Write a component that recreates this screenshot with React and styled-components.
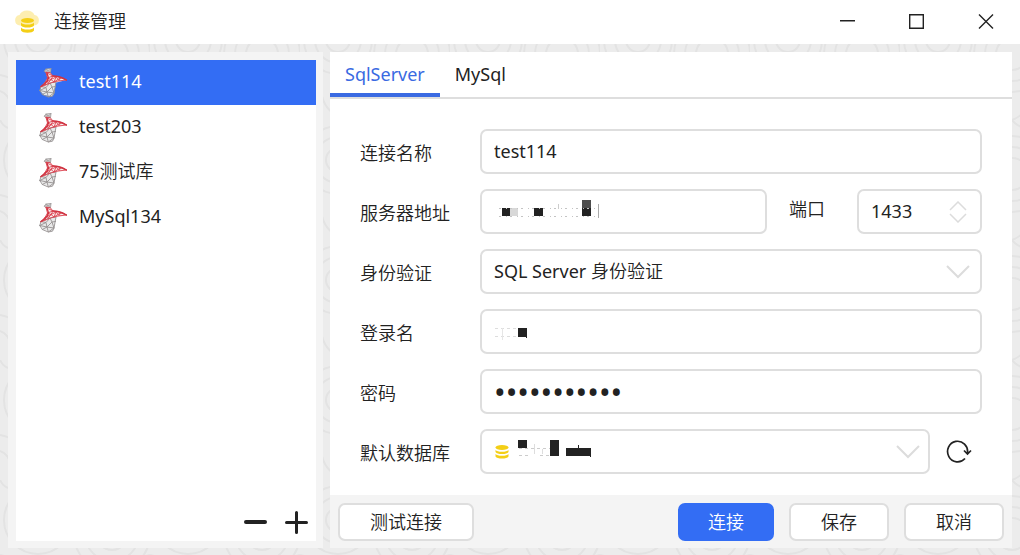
import React, { useState } from "react";
import styled, { createGlobalStyle } from "styled-components";

const GlobalStyle = createGlobalStyle`
  * { box-sizing: border-box; }
  body { margin: 0; }
  body, button, input, select {
    font-family: "Noto Sans", "Noto Sans CJK SC", sans-serif;
    font-size: 18px;
    font-weight: 400;
    color: #222;
  }
  :lang(zh) { font-family: "Noto Sans CJK SC", sans-serif; font-weight: 350; }
`;

const Window = styled.div`
  position: relative;
  min-height: 100vh;
  display: flex;
  flex-direction: column;
  background: #ececec;
`;

const Backdrop = styled.svg`
  position: absolute;
  inset: 0;
  width: 100%;
  height: 100%;
`;

const TitleBar = styled.header`
  position: relative;
  display: flex;
  align-items: center;
  height: 44px;
  padding-left: 15px;
  gap: 15px;
  background: #fff;
`;

const Title = styled.h1`
  flex: 1;
  margin: 0;
  padding-bottom: 4px;
  font-size: 18px;
  line-height: 24px;
`;

const WindowControls = styled.div`
  display: flex;
  align-self: stretch;
`;

const PlainButton = styled.button`
  display: flex;
  align-items: center;
  justify-content: center;
  padding: 0;
  border: 0;
  background: transparent;
`;

const ControlButton = styled(PlainButton)`
  width: 69px;
`;

const Body = styled.main`
  position: relative;
  flex: 1;
  display: grid;
  grid-template-columns: 315px 1fr;
  gap: 7px;
  padding: 8px 8px 7px;
`;

const Sidebar = styled.aside`
  display: flex;
  padding: 8px 7px 7px 8px;
  background: #f4f4f4;
`;

const SidebarInner = styled.div`
  flex: 1;
  display: flex;
  flex-direction: column;
  justify-content: space-between;
  background: #fff;
`;

const ConnectionList = styled.ul`
  margin: 0;
  padding: 0;
  list-style: none;
`;

const ConnectionItem = styled.button`
  display: flex;
  align-items: center;
  gap: 12px;
  width: 100%;
  height: 45px;
  padding: 0 23px;
  border: 0;
  text-align: left;
  color: ${(p) => (p.$active ? "#fff" : "#222")};
  background: ${(p) => (p.$active ? "#336df4" : "transparent")};
`;

const ConnectionName = styled.span`
  padding-bottom: 4px;
  line-height: 24px;
`;

const SidebarTools = styled.div`
  display: flex;
  justify-content: flex-end;
  gap: 18px;
  padding: 7px 8px;
`;

const Panel = styled.section`
  display: flex;
  flex-direction: column;
  min-width: 0;
  background: #fff;
`;

const Tabs = styled.div`
  display: flex;
  height: 47px;
  border-bottom: 2px solid #dedede;
`;

const Tab = styled.button`
  padding: 0 15px 2px;
  border: 0;
  border-top: 4px solid transparent;
  border-bottom: 4px solid ${(p) => (p.$active ? "#3a6ae2" : "transparent")};
  background: transparent;
  color: ${(p) => (p.$active ? "#3a6ae2" : "#222")};
`;

const Form = styled.form`
  flex: 1;
  display: flex;
  flex-direction: column;
  gap: 15px;
  padding: 30px 30px 21px;
`;

const Row = styled.div`
  display: flex;
  align-items: center;
`;

const Label = styled.label`
  width: 120px;
  flex-shrink: 0;
  line-height: 24px;
`;

const PortLabel = styled.label`
  padding: 0 32px 8px 22px;
  line-height: 24px;
`;

const Field = styled.div`
  position: relative;
  display: flex;
  height: 45px;
  min-width: 0;
  flex: ${(p) => (p.$fixed ? "0 0 125px" : "1")};
`;

const controlStyle = `
  width: 100%;
  height: 45px;
  padding: 0 12px 2px;
  border: 2px solid #dedede;
  border-radius: 7px;
  background: #fff;
  outline: none;
`;

const TextInput = styled.input`
  ${controlStyle}
  appearance: textfield;
  &::-webkit-inner-spin-button { display: none; }
`;

const PasswordInput = styled(TextInput)`
  padding-bottom: 0;
  font-family: "Noto Sans", sans-serif;
  font-size: 31px;
`;

const Select = styled.select`
  ${controlStyle}
  appearance: none;
  font-family: "Noto Sans", "Noto Sans CJK SC DemiLight", "Noto Sans CJK SC", sans-serif;
`;

const FieldIcon = styled.span`
  position: absolute;
  top: 0;
  bottom: 0;
  right: ${(p) => p.$right}px;
  display: flex;
  align-items: center;
  pointer-events: none;
`;

const Masked = styled.svg`
  position: absolute;
  left: 14px;
  top: 9px;
  pointer-events: none;
`;

const RefreshButton = styled(PlainButton)`
  width: 52px;
  height: 45px;
  padding-right: 9px;
  padding-left: 15px;
`;

const Footer = styled.footer`
  display: flex;
  gap: 15px;
  padding: 8px 8px 7px;
  background: #f4f4f4;
`;

const Button = styled.button`
  width: ${(p) => p.$width}px;
  height: 38px;
  padding: 0 0 2px;
  border: ${(p) => (p.$primary ? "0" : "2px solid #dedede")};
  border-radius: 7px;
  background: ${(p) => (p.$primary ? "#336df4" : "#fff")};
  color: ${(p) => (p.$primary ? "#fff" : "#222")};
  margin-right: ${(p) => (p.$push ? "auto" : "0")};
`;

function BackdropPattern() {
  return (
    <Backdrop aria-hidden="true">
      <defs>
        <pattern id="rings" width="150" height="120" patternUnits="userSpaceOnUse">
          <g fill="none" stroke="#e3e3e3" strokeWidth="2">
            <circle cx="38" cy="40" r="34" />
            <circle cx="38" cy="40" r="23" />
            <circle cx="38" cy="40" r="12" />
            <circle cx="112" cy="54" r="38" />
            <circle cx="112" cy="54" r="27" />
            <circle cx="112" cy="54" r="16" />
            <path d="M0 75Q18 78 22 96T48 120M0 91Q9 94 11 106T22 120M48 0Q65 8 75 0M0 0Q8 16 22 0M150 75Q132 78 130 96T112 120M150 91Q143 94 142 106T134 120M112 0Q124 14 134 0" />
            <path d="M38 84q22-6 32 10t26 26M40 98q14-2 22 10l10 12" />
          </g>
        </pattern>
      </defs>
      <rect width="100%" height="100%" fill="url(#rings)" />
    </Backdrop>
  );
}

function AppLogo() {
  return (
    <svg width="24" height="24" viewBox="0 0 24 24" aria-hidden="true">
      <path d="M5 15.500A5.300 5.300 0 0 1 4.500 5A8 7 0 0 1 19.500 5A5.300 5.300 0 0 1 19 15.500Z" fill="#fdeeb0" />
      <g fill="#f4cf16">
        <ellipse cx="12.500" cy="10.500" rx="6.500" ry="2.600" />
        <path d="M6 12.500q1.500 2 6.500 2t6.500-2v3q-1.500 2-6.500 2T6 15.500z" />
        <path d="M6 17.500q1.500 2 6.500 2t6.500-2v3q-1.500 2.200-6.500 2.200T6 20.500z" />
      </g>
    </svg>
  );
}

function ServerIcon() {
  return (
    <svg width="28" height="30" viewBox="0 0 28 30" aria-hidden="true">
      <path d="M5.500 3L7 1l5-.5-.5 4L7 4.500z" fill="#e0dede" />
      <path d="M2 18.500L11 15l6-1-2 12-2 2.500-8-1.500-4-4z" fill="#e8e8e8" />
      <path d="M7 4.500l4.500.5L14 8l7 1.500 6.500 2.500-8 2-7 1.500-10.500 4L6 14l2.500-4z" fill="#f9eeee" />
      <g fill="none" strokeLinejoin="round" strokeLinecap="round">
        <path d="M5.500 3L7 1l5-.5-.5 4L7 4.500zM7 1l2.500 2 2.500-2.500M5.500 3h4l2 1.500" stroke="#999595" strokeWidth=".8" />
        <path d="M2 18.500L.8 22.500l2.500 4 6 2.500 4.200-.8 1.500-3.200 2-11-6 1zM2 18.500l5 1 4-4.500 2 4 3.500-.5M.8 22.500L7 19.500l1 4.500 5-5 2 6M.8 22.500L8 24l-4.700 2.500M8 24l7 1-5.700 4L8 24" stroke="#969292" strokeWidth=".9" />
        <path d="M7 4.500L8.500 10 6 14.500 1.500 19l5-2 6.500-2.500 6-1.500 8.500-1L20 9l-6-1-2.500-3zM8.500 10L14 8M7 4.500L14 8l-2 3.500-3.500-1.500L9 15.500l3-4 3 2.500 2-5-5 2.500M6 14.500l6-3M17 9l3 3.500L22 9.500M15 14l7-4.500 5.500 2.500M6 14.500l.5 2.500" stroke="#dc4350" strokeWidth=".9" />
        <path d="M8 5L9.500 10Q8 15 2 18.500M14 8q7 0 13.500 4" stroke="#cf3442" strokeWidth="1.300" />
      </g>
    </svg>
  );
}

function Chevron() {
  return (
    <svg width="24" height="14" viewBox="0 0 24 14" fill="none" stroke="#dcdcdc" strokeWidth="2" aria-hidden="true">
      <path d="M1 1l11 11L23 1" />
    </svg>
  );
}

const CONNECTIONS = ["test114", "test203", "75测试库", "MySql134"];

export default function App() {
  const [selected, setSelected] = useState(0);
  const [tab, setTab] = useState("SqlServer");

  return (
    <Window lang="en">
      <GlobalStyle />
      <BackdropPattern />
      <TitleBar>
        <AppLogo />
        <Title lang="zh">连接管理</Title>
        <WindowControls>
          <ControlButton aria-label="最小化">
            <svg width="16" height="16" stroke="#222" strokeWidth="1.500"><path d="M0 6.750h15" /></svg>
          </ControlButton>
          <ControlButton aria-label="最大化">
            <svg width="16" height="16" fill="none" stroke="#222" strokeWidth="1.400"><path d="M.7.700h13.600v13.600H.7z" /></svg>
          </ControlButton>
          <ControlButton aria-label="关闭">
            <svg width="16" height="16" stroke="#222" strokeWidth="1.400"><path d="M1 .5l14 14M15 .5L1 14.500" /></svg>
          </ControlButton>
        </WindowControls>
      </TitleBar>

      <Body>
        <Sidebar>
          <SidebarInner>
            <ConnectionList>
              {CONNECTIONS.map((name, i) => (
                <li key={name}>
                  <ConnectionItem $active={i === selected} onClick={() => setSelected(i)}>
                    <ServerIcon />
                    <ConnectionName>
                      {name.startsWith("75") ? <>75<span lang="zh">测试库</span></> : name}
                    </ConnectionName>
                  </ConnectionItem>
                </li>
              ))}
            </ConnectionList>
            <SidebarTools>
              <PlainButton aria-label="删除">
                <svg width="23" height="24" stroke="#222" strokeWidth="4" strokeLinecap="round"><path d="M2 12h19" /></svg>
              </PlainButton>
              <PlainButton aria-label="新增">
                <svg width="23" height="24" stroke="#222" strokeWidth="3" strokeLinecap="round"><path d="M1.500 12.500h20M11.500 2.500v20" /></svg>
              </PlainButton>
            </SidebarTools>
          </SidebarInner>
        </Sidebar>

        <Panel>
          <Tabs role="tablist">
            {["SqlServer", "MySql"].map((t) => (
              <Tab key={t} role="tab" aria-selected={t === tab} $active={t === tab} onClick={() => setTab(t)}>{t}</Tab>
            ))}
          </Tabs>
          <Form>
            <Row>
              <Label lang="zh" htmlFor="name">连接名称</Label>
              <Field><TextInput id="name" defaultValue="test114" /></Field>
            </Row>
            <Row>
              <Label lang="zh" htmlFor="host">服务器地址</Label>
              <Field>
                <TextInput id="host" />
                <Masked width="120" height="30" viewBox="0 0 120 30" shapeRendering="crispEdges">
                  <path d="M8 10h8v8H8zM40 10h9v8h-9zM88 10h9v8h-9z" fill="#222" />
                  <path d="M88 2h9v8h-9z" fill="#4d4d4d" />
                  <path d="M16 10h8v8h-8z" fill="#d8d8d8" />
                  <path d="M5 10.500h99M5 18.500h99" stroke="#c4c4c4" strokeDasharray="2 5 1 3" />
                  <path d="M104.500 6v14" stroke="#aaa" />
                  <path d="M64.500 6v5" stroke="#ccc" />
                </Masked>
              </Field>
              <PortLabel lang="zh" htmlFor="port">端口</PortLabel>
              <Field $fixed>
                <TextInput id="port" type="number" defaultValue="1433" />
                <FieldIcon $right={15}>
                  <svg width="18" height="22" fill="none" stroke="#dcdcdc" strokeWidth="1.500"><path d="M1 9l8-8 8 8M1 13l8 8 8-8" /></svg>
                </FieldIcon>
              </Field>
            </Row>
            <Row>
              <Label lang="zh" htmlFor="auth">身份验证</Label>
              <Field>
                <Select id="auth"><option>SQL Server 身份验证</option></Select>
                <FieldIcon $right={12}><Chevron /></FieldIcon>
              </Field>
            </Row>
            <Row>
              <Label lang="zh" htmlFor="login">登录名</Label>
              <Field>
                <TextInput id="login" />
                <Masked width="60" height="30" viewBox="0 0 60 30" shapeRendering="crispEdges">
                  <path d="M24 10h9v10h-1v-1h-8z" fill="#222" />
                  <path d="M1 10.500h23M1 18.500h23" stroke="#ddd" strokeDasharray="3 3" />
                  <path d="M8.500 10v12" stroke="#e6e6e6" />
                </Masked>
              </Field>
            </Row>
            <Row>
              <Label lang="zh" htmlFor="password">密码</Label>
              <Field><PasswordInput id="password" type="password" defaultValue="***********" /></Field>
            </Row>
            <Row>
              <Label lang="zh" htmlFor="database">默认数据库</Label>
              <Field>
                <Select id="database"><option aria-label="默认数据库" /></Select>
                <Masked width="120" height="30" viewBox="0 0 120 30">
                  <g fill="#f4cf16">
                    <ellipse cx="8" cy="9.500" rx="6.500" ry="2.500" />
                    <path d="M1.500 12q1.500 1.800 6.500 1.800t6.500-1.800v2q-1.500 2-6.500 2t-6.500-2zM1.500 16q1.500 1.800 6.500 1.800t6.500-1.800v2.500q-1.500 2-6.500 2t-6.500-2z" />
                  </g>
                  <g shapeRendering="crispEdges">
                    <path d="M24 2h9v8h-9zM56 2h9v16h-9zM72 10h12V7h1v3h12v9h-1v-1H72z" fill="#222" />
                    <path d="M25 10.500h31M25 17.500h9M46 17.500h10" stroke="#ccc" strokeDasharray="3 3" />
                    <path d="M40.500 6v10M48.500 11v5" stroke="#ddd" />
                  </g>
                </Masked>
                <FieldIcon $right={10}><Chevron /></FieldIcon>
              </Field>
              <RefreshButton type="button" aria-label="刷新">
                <svg width="26" height="24" fill="none" stroke="#222" strokeWidth="1.700">
                  <path d="M19 18.500A10 10.300 0 1 1 21.500 13M18 10.500l3.500 3.500 3.500-3.500" />
                </svg>
              </RefreshButton>
            </Row>
          </Form>
          <Footer lang="zh">
            <Button $width={136} $push>测试连接</Button>
            <Button $width={96} $primary>连接</Button>
            <Button $width={100}>保存</Button>
            <Button $width={100}>取消</Button>
          </Footer>
        </Panel>
      </Body>
    </Window>
  );
}
